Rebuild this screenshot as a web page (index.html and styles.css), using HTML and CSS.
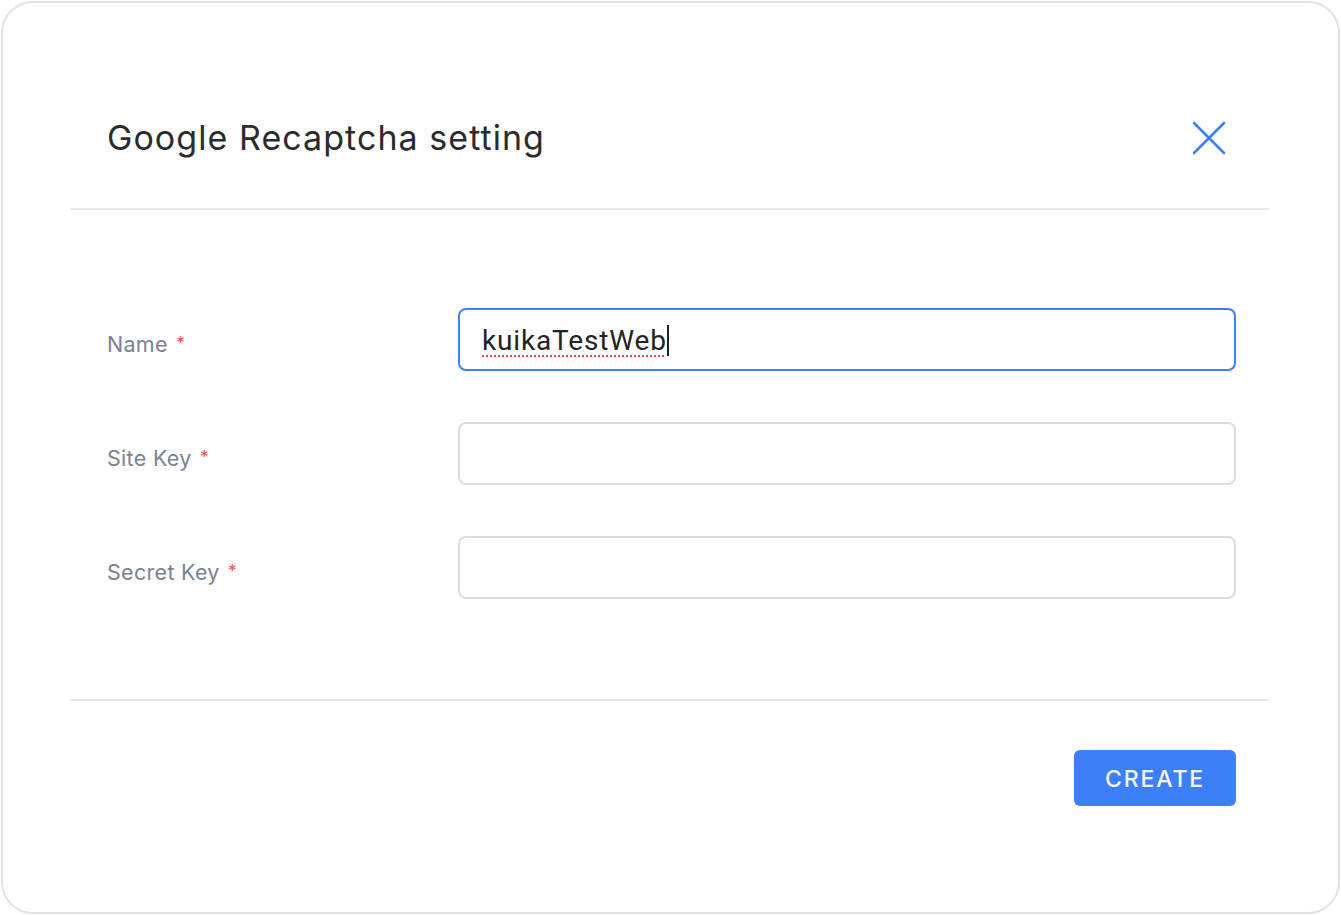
FILE: index.html
```html
<!DOCTYPE html>
<html>
<head>
<meta charset="utf-8">
<link rel="stylesheet" href="styles.css">
</head>
<body>
<div class="dialog">
  <div class="header">
    <h1 class="title">Google Recaptcha setting</h1>
    <button class="close" aria-label="Close">
      <svg width="34" height="34" viewBox="0 0 34 34"><path d="M2 2 L32 32 M32 2 L2 32" stroke="#3b82f6" stroke-width="2.6" stroke-linecap="round" fill="none"/></svg>
    </button>
  </div>
  <div class="body">
    <div class="row">
      <label class="label">Name <span class="req">*</span></label>
      <div class="field focused"><span class="value">kuikaTestWeb</span><span class="caret"></span></div>
    </div>
    <div class="row">
      <label class="label">Site Key <span class="req">*</span></label>
      <div class="field"></div>
    </div>
    <div class="row">
      <label class="label">Secret Key <span class="req">*</span></label>
      <div class="field"></div>
    </div>
  </div>
  <div class="footer">
    <button class="create">CREATE</button>
  </div>
</div>
</body>
</html>
```
FILE: styles.css
```css
* { box-sizing: border-box; }
html, body { margin: 0; padding: 0; background: #ffffff; }
body { font-family: Inter, "Noto Sans", sans-serif; }

.dialog {
  width: 1339px;
  height: 913px;
  margin: 1px;
  border: 2px solid #dfe2e7;
  border-radius: 32px;
  padding: 0 69px 0 67px;
  background: #fff;
}

.header {
  display: flex;
  align-items: center;
  justify-content: space-between;
  padding: 108px 43px 43px 37px;
  border-bottom: 2px solid #e6e8ec;
}
.title {
  margin: 0;
  font-size: 34px;
  line-height: 54px;
  font-weight: 400;
  color: #2a2b2e;
  letter-spacing: 1.05px;
}
.close {
  border: 0;
  background: none;
  padding: 0;
  width: 34px;
  height: 34px;
  display: flex;
}

.body {
  padding: 98px 33px 100px 37px;
  display: flex;
  flex-direction: column;
  gap: 51px;
  border-bottom: 2px solid #e6e8ec;
}
.row {
  display: flex;
  align-items: center;
}
.label {
  width: 351px;
  font-size: 21.5px;
  color: #7b8290;
  padding-top: 8px;
  letter-spacing: 0.3px;
}
.req { color: #f04a4a; font-size: 17px; vertical-align: 3px; margin-left: 2px; }
.field {
  flex: 1;
  height: 63px;
  border: 2px solid #d9dce2;
  border-radius: 8px;
  display: flex;
  align-items: center;
  padding: 0 22px;
}
.field.focused { border-color: #3b82f6; }
.value {
  font-family: Roboto, "Liberation Sans", sans-serif;
  font-size: 28px;
  letter-spacing: 0.85px;
  color: #222326;
  text-decoration: underline dotted #f04a4a;
  text-decoration-thickness: 2px;
  text-underline-offset: 5px;
  text-decoration-skip-ink: none;
  padding-top: 2px;
}
.caret {
  width: 2px;
  height: 31px;
  background: #222;
  margin-left: 0;
  margin-top: 2px;
}

.footer {
  display: flex;
  justify-content: flex-end;
  padding: 49px 33px 0 0;
}
.create {
  width: 162px;
  height: 56px;
  border: 0;
  border-radius: 6px;
  background: #3d7ff8;
  color: #f4f7ff;
  font-family: Inter, "Noto Sans", sans-serif;
  font-size: 23px;
  letter-spacing: 1.9px;
  font-weight: 500;
  padding-top: 2px;
}
```
